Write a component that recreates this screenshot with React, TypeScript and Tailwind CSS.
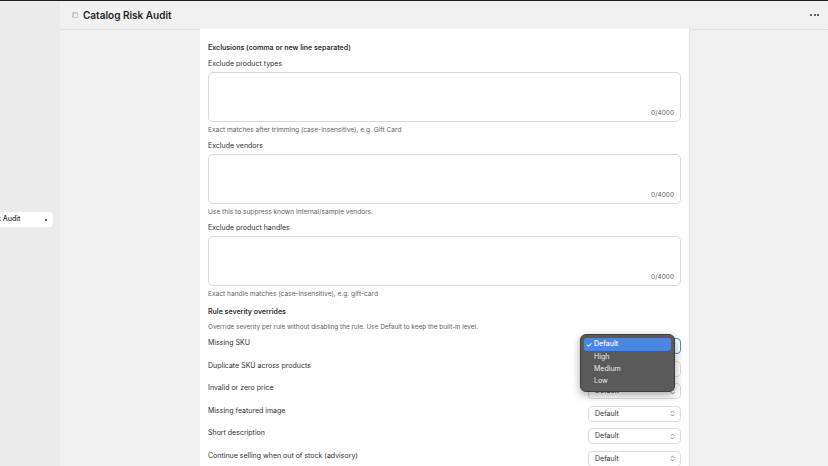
import React from 'react';

type Rule = { label: string };

const rules: Rule[] = [
  { label: 'Missing SKU' },
  { label: 'Duplicate SKU across products' },
  { label: 'Invalid or zero price' },
  { label: 'Missing featured image' },
  { label: 'Short description' },
  { label: 'Continue selling when out of stock (advisory)' },
];

const exclusions = [
  { label: 'Exclude product types', help: 'Exact matches after trimming (case-insensitive), e.g. Gift Card' },
  { label: 'Exclude vendors', help: 'Use this to suppress known internal/sample vendors.' },
  { label: 'Exclude product handles', help: 'Exact handle matches (case-insensitive), e.g. gift-card' },
];

const Chevrons = () => (
  <svg width="5" height="7" viewBox="0 0 10 14" fill="none" stroke="#6b6b6b" strokeWidth="1.6" strokeLinecap="round" strokeLinejoin="round">
    <path d="M2 5l3-3 3 3" />
    <path d="M2 9l3 3 3-3" />
  </svg>
);

// native select popup, drawn open over the first row
const SeverityMenu = () => (
  <div className="absolute left-[-8px] top-[-4px] z-10 w-[95px] rounded-[6px] border border-[#3d3d3d] bg-[#5a5a5a] px-[3px] py-[3px] shadow-[0_3px_8px_rgba(0,0,0,0.35)]">
    <div className="flex h-[13px] items-center gap-[2px] rounded-[3px] bg-[#4a86e6] pl-[2px] text-[7px] font-medium text-white">
      <span className="w-[6px] text-[7px] leading-none">✓</span>
      <span>Default</span>
    </div>
    {['High', 'Medium', 'Low'].map((o) => (
      <div key={o} className="flex h-[12.3px] items-center pl-[10px] text-[7px] text-[#ececec]">
        {o}
      </div>
    ))}
  </div>
);

const SeveritySelect = ({ open }: { open?: boolean }) => (
  <div className="relative">
    <div
      className={
        open
          ? 'flex h-[16px] w-[93px] items-center justify-between rounded-[4px] border border-[#4a86e6] bg-white pl-[6px] pr-[5px]'
          : 'flex h-[16px] w-[93px] items-center justify-between rounded-[4px] border border-[#dcdcdc] bg-white pl-[6px] pr-[5px]'
      }
    >
      <span className="text-[7px] text-[#303030]">Default</span>
      <Chevrons />
    </div>
    {open && <SeverityMenu />}
  </div>
);

export default function App() {
  return (
    <div className="flex h-[466px] w-[828px] overflow-hidden border-t border-[#1f1f1f] bg-[#f1f1f1] text-[#303030]" style={{ fontFamily: 'Inter, "Noto Sans", sans-serif' }}>
      {/* sidebar */}
      <div className="w-[60px] shrink-0 overflow-hidden bg-[#ebebeb] pt-[211px]">
        <div className="flex h-[15px] w-[53px] items-center justify-between overflow-hidden rounded-r-[4px] bg-white pr-[6px]">
          <span className="-ml-[13px] whitespace-nowrap text-[7px] font-medium text-[#303030]">Risk Audit</span>
          <span className="h-[2px] w-[2px] rounded-full bg-[#303030]" />
        </div>
      </div>

      {/* main */}
      <div className="flex min-w-0 flex-1 flex-col">
        <div className="flex h-[29px] shrink-0 items-center justify-between border-b border-dotted border-[#d6d6d6] pl-[12px] pr-[9px]">
          <div className="flex items-center gap-[5px]">
            <div className="flex h-[6px] w-[6px] items-center justify-center rounded-[1px] bg-[#c9c9c9]">
              <div className="h-[3px] w-[3px] bg-[#f4f4f4]" />
            </div>
            <span className="text-[10px] font-semibold text-[#1f1f1f]">Catalog Risk Audit</span>
          </div>
          <div className="flex gap-[1.5px]">
            <span className="h-[2px] w-[2px] rounded-full bg-[#303030]" />
            <span className="h-[2px] w-[2px] rounded-full bg-[#303030]" />
            <span className="h-[2px] w-[2px] rounded-full bg-[#303030]" />
          </div>
        </div>

        <div className="-mt-px flex flex-1 pl-[140px]">
          <div className="w-[490px] border-r border-[#e1e1e1] bg-white px-[8px] pt-[14px]">
            <div className="text-[7px] font-semibold leading-[10px] text-[#303030]">Exclusions (comma or new line separated)</div>

            {exclusions.map((ex) => (
              <div key={ex.label} className="mt-[6px]">
                <div className="text-[7px] leading-[10px]">{ex.label}</div>
                <div className="mt-[3px] flex h-[50px] items-end justify-end rounded-[5px] border border-[#d9d9d9] pb-[4px] pr-[6px]">
                  <span className="text-[6.5px] leading-[8px] text-[#616161]">0/4000</span>
                </div>
                <div className="mt-[3px] text-[6.6px] leading-[10px] text-[#616161]">{ex.help}</div>
              </div>
            ))}

            <div className="mt-[8px] text-[7px] font-semibold leading-[10px]">Rule severity overrides</div>
            <div className="mt-[5px] text-[6.4px] leading-[10px] text-[#616161]">
              Override severity per rule without disabling the rule. Use Default to keep the built-in level.
            </div>

            <div className="mt-[6px] flex flex-col gap-[6.6px]">
              {rules.map((r, i) => (
                <div key={r.label} className="flex items-start justify-between">
                  <span className="text-[7px] leading-[10px]">{r.label}</span>
                  <SeveritySelect open={i === 0} />
                </div>
              ))}
            </div>
          </div>
        </div>
      </div>
    </div>
  );
}
